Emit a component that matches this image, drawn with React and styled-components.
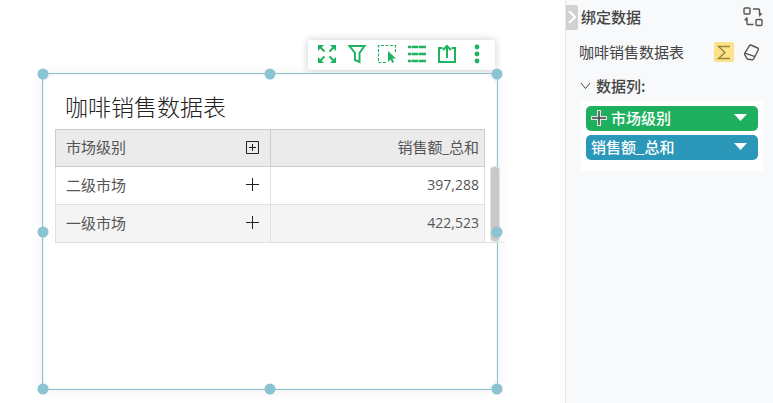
import React from "react";
import styled, { createGlobalStyle } from "styled-components";

const GlobalStyle = createGlobalStyle`
  * { box-sizing: border-box; }
  body {
    margin: 0;
    background: #fff;
    color: #444;
    font-family: "Open Sans", "Noto Sans CJK SC", sans-serif;
    font-size: 15px;
  }
  h1, h2, h3, ul { margin: 0; padding: 0; font-weight: 400; }
  svg { display: block; }
`;

const cjk = `"Noto Sans CJK SC", sans-serif`;
const accent = "#8bc3d3";

const Page = styled.div`
  display: flex;
  min-height: 100vh;
`;

const Canvas = styled.main`
  flex: 1;
  min-width: 0;
  display: flex;
  flex-direction: column;
  padding: 40px 67px 13px 42px;
`;

const PlainButton = styled.button`
  display: flex;
  align-items: center;
  justify-content: center;
  padding: 0;
  border: 0;
  background: transparent;
  color: inherit;
  font: inherit;
  cursor: pointer;
`;

const Toolbar = styled.div`
  align-self: flex-end;
  display: flex;
  height: 30px;
  margin: 0 3px 3px 0;
  padding: 0 3px 0 4px;
  border-radius: 2px;
  background: #fff;
  color: #1fb35f;
  box-shadow: 0 0 8px rgba(0, 0, 0, 0.2);
`;

const ToolButton = styled(PlainButton)`
  width: 30px;
  height: 28px;
`;

const Widget = styled.section`
  position: relative;
  flex: 1;
  display: flex;
  flex-direction: column;
  border: 1px solid ${accent};
  background: #f5f5f5;
  box-shadow: 0 1px 12px rgba(0, 0, 0, 0.07);
`;

const Card = styled.div`
  flex: 1;
  margin: 1px;
  padding: 15px 0 0 11px;
  border-radius: 12px;
  background: #fff;
`;

const Title = styled.h1`
  padding-left: 10px;
  font-family: ${cjk};
  font-size: 23px;
  font-weight: 300;
  line-height: 32px;
  color: #222;
`;

const Handle = styled.span`
  position: absolute;
  left: ${(p) => p.$x};
  top: ${(p) => p.$y};
  width: 11px;
  height: 11px;
  border-radius: 50%;
  background: ${accent};
  transform: translate(-50%, -50%);
`;

const GridArea = styled.div`
  display: flex;
  margin: 7px -9px 0 0;
`;

const Table = styled.table`
  flex: 1;
  border-collapse: collapse;
  table-layout: fixed;
  color: #555;
`;

const NameCol = styled.col`
  width: 50%;
`;

const HeadCell = styled.th`
  height: 37px;
  padding: 0 ${(p) => (p.$end ? "5px" : "10px")} 2px 10px;
  border: 1px solid #ccc;
  background: #ebebeb;
  font-weight: 400;
  line-height: 22px;
  text-align: ${(p) => (p.$end ? "right" : "left")};
`;

const Cell = styled.td`
  height: 38px;
  padding: 0 ${(p) => (p.$end ? "5px" : "10px")} 2px 10px;
  border: 1px solid #e0e0e0;
  background: ${(p) => (p.$shade ? "#f4f4f4" : "#fff")};
  font-size: ${(p) => (p.$end ? "14px" : "15px")};
  line-height: 22px;
  text-align: ${(p) => (p.$end ? "right" : "left")};
`;

const Spread = styled.div`
  display: flex;
  align-items: center;
  justify-content: space-between;
`;

const ExpandButton = styled(PlainButton)`
  width: 15px;
  height: 15px;
  color: #222;
`;

const Track = styled.div`
  width: 20px;
  display: flex;
  padding: 37px 5px 0;
  border-bottom: 1px solid #e2e2e2;
`;

const Thumb = styled.div`
  flex: 1;
  border-radius: 4px;
  border: 1px solid #e4e4e4;
  background: #c8c8c8;
`;

const Panel = styled.aside`
  width: 208px;
  flex: none;
  border-left: 1px solid #e5e8ec;
  background: #f7f9fb;
  font-family: ${cjk};
`;

const PanelHeader = styled.header`
  display: flex;
  align-items: center;
  height: 34px;
  padding-right: 10px;
`;

const CollapseButton = styled(PlainButton)`
  width: 12px;
  height: 25px;
  margin-right: 3px;
  border-radius: 0 2px 2px 0;
  background: #d1d1d1;
  color: #fff;
`;

const PanelTitle = styled.h2`
  flex: 1;
  font-size: 15px;
  font-weight: 500;
  line-height: 22px;
`;

const SourceRow = styled.div`
  display: flex;
  align-items: center;
  height: 36px;
  padding: 0 11px 0 13px;
`;

const SourceName = styled.span`
  flex: 1;
  line-height: 22px;
`;

const IconButton = styled(PlainButton)`
  width: 20px;
  height: 20px;
  margin-left: ${(p) => (p.$gap ? "8px" : "0")};
  border-radius: 2px;
  background: ${(p) => (p.$active ? "#fee28a" : "transparent")};
  color: ${(p) => (p.$active ? "#9a8442" : "#555")};
`;

const SectionToggle = styled(PlainButton)`
  gap: 5px;
  height: 31px;
  padding-left: 14px;
  font-weight: 500;
  line-height: 22px;
`;

const Fields = styled.ul`
  display: flex;
  flex-direction: column;
  gap: 4px;
  margin: 0 10px 0 15px;
  padding: 5px 5px 11px;
  border-radius: 3px;
  background: #fff;
  list-style: none;
`;

const Chip = styled.li`
  display: flex;
  align-items: center;
  gap: 4px;
  height: 25px;
  padding: 0 11px 2px 5px;
  border-radius: 5px;
  background: ${(p) => p.$color};
  color: #fff;
  font-weight: 500;
  line-height: 22px;
`;

const ChipLabel = styled.span`
  flex: 1;
`;

const Icon = ({ size = 20, width = 2, children, ...rest }) => (
  <svg
    width={size}
    height={size}
    viewBox={`0 0 ${size} ${size}`}
    fill="none"
    stroke="currentColor"
    strokeWidth={width}
    aria-hidden="true"
    {...rest}
  >
    {children}
  </svg>
);

const tools = [
  {
    label: "最大化",
    icon: (
      <Icon>
        <path d="M2 2l5.500 5.500M18 2l-5.500 5.500M18 18l-5.500-5.500M2 18l5.500-5.500" />
        <path d="M1 1h6L1 7zM19 1h-6l6 6zM19 19h-6l6-6zM1 19h6L1 13z" fill="currentColor" stroke="none" />
      </Icon>
    ),
  },
  {
    label: "筛选",
    icon: (
      <Icon>
        <path d="M2.500 2h15L12.500 9v9L8 16V9z" />
      </Icon>
    ),
  },
  {
    label: "选择",
    icon: (
      <Icon>
        <path d="M9 18.500H1.500v-17h17V9" strokeWidth="1.200" strokeDasharray="3 1.500" />
        <path d="M11 7v11l2.600-2.600 1.700 3.600 1.800-.9-1.700-3.500H19z" fill="currentColor" stroke="none" />
      </Icon>
    ),
  },
  {
    label: "列表",
    icon: (
      <Icon width={2.4}>
        <path d="M1 3h3.500M5 3h6.500M12 3H19M1 10h3.500M5 10h6.500M12 10H19M1 17h3.500M5 17h6.500M12 17H19" />
      </Icon>
    ),
  },
  {
    label: "导出",
    icon: (
      <Icon>
        <path d="M5.500 4H2v14h16V4h-3.500M10 14V2M6 6l4-4 4 4" />
      </Icon>
    ),
  },
  {
    label: "更多",
    icon: (
      <Icon fill="currentColor" stroke="none">
        <circle cx="10" cy="3" r="2.400" />
        <circle cx="10" cy="10" r="2.400" />
        <circle cx="10" cy="17" r="2.400" />
      </Icon>
    ),
  },
];

const handles = [
  ["0%", "0%"], ["50%", "0%"], ["100%", "0%"],
  ["0%", "50%"], ["100%", "50%"],
  ["0%", "100%"], ["50%", "100%"], ["100%", "100%"],
];

const rows = [
  { name: "二级市场", total: "397,288" },
  { name: "一级市场", total: "422,523" },
];

const fields = [
  { name: "市场级别", color: "#1eb05e", plus: true },
  { name: "销售额_总和", color: "#2b97b9" },
];

const PlusIcon = ({ boxed }) => (
  <Icon size={15} width={1}>
    {boxed && <path d="M1.500 1.500h12v12h-12z" />}
    <path d={boxed ? "M4 7.500h7M7.500 4v7" : "M1 7.500h13M7.500 1v13"} />
  </Icon>
);

export default function App() {
  return (
    <>
      <GlobalStyle />
      <Page>
        <Canvas>
          <Toolbar role="toolbar">
            {tools.map((t) => (
              <ToolButton key={t.label} aria-label={t.label}>{t.icon}</ToolButton>
            ))}
          </Toolbar>
          <Widget>
            <Card>
              <Title>咖啡销售数据表</Title>
              <GridArea>
                <Table>
                  <colgroup>
                    <NameCol />
                    <col />
                  </colgroup>
                  <thead>
                    <tr>
                      <HeadCell scope="col">
                        <Spread>
                          市场级别
                          <ExpandButton aria-label="全部展开"><PlusIcon boxed /></ExpandButton>
                        </Spread>
                      </HeadCell>
                      <HeadCell scope="col" $end>销售额_总和</HeadCell>
                    </tr>
                  </thead>
                  <tbody>
                    {rows.map((r, i) => (
                      <tr key={r.name}>
                        <Cell $shade={i % 2 === 1}>
                          <Spread>
                            {r.name}
                            <ExpandButton aria-label="展开"><PlusIcon /></ExpandButton>
                          </Spread>
                        </Cell>
                        <Cell $end $shade={i % 2 === 1}>{r.total}</Cell>
                      </tr>
                    ))}
                  </tbody>
                </Table>
                <Track><Thumb /></Track>
              </GridArea>
            </Card>
            {handles.map(([x, y]) => (
              <Handle key={x + y} $x={x} $y={y} />
            ))}
          </Widget>
        </Canvas>

        <Panel>
          <PanelHeader>
            <CollapseButton aria-label="收起">
              <svg width="8" height="14" viewBox="0 0 8 14" fill="none" stroke="currentColor" strokeWidth="2">
                <path d="M1 1l6 6-6 6" />
              </svg>
            </CollapseButton>
            <PanelTitle>绑定数据</PanelTitle>
            <IconButton aria-label="切换">
              <Icon width={1.4}>
                <rect x="1" y="1" width="6" height="6" rx="1" />
                <rect x="13" y="12.500" width="6" height="6" rx="1" />
                <path d="M10 2h5.500q1 0 1 1v5M10.500 17.500H5q-1 0-1-1v-5" />
                <path d="M16.500 9.500V6l2.300.5zM4 10v3.500L1.500 13z" fill="currentColor" strokeWidth="0.600" />
              </Icon>
            </IconButton>
          </PanelHeader>
          <SourceRow>
            <SourceName>咖啡销售数据表</SourceName>
            <IconButton $active aria-label="汇总">
              <Icon width={1.4}>
                <path d="M16 4.500H4.500l6.500 6-6.500 6H16" />
              </Icon>
            </IconButton>
            <IconButton $gap aria-label="清除">
              <Icon width={1.4} strokeLinejoin="round">
                <path d="M8.700 3l7 3q1.200.6.600 1.800l-4.500 9q-.5 1-1.600.9l-4.200-.4q-.7 0-1-.8L2.800 12.800q-.4-.8 0-1.600l4.700-7.500q.4-1 1.200-.7zM3.500 11.300l9.700 3.400" />
              </Icon>
            </IconButton>
          </SourceRow>
          <SectionToggle aria-expanded="true">
            <svg width="11" height="8" viewBox="0 0 11 8" fill="none" stroke="currentColor">
              <path d="M1 1l4.500 5.500L10 1" />
            </svg>
            数据列:
          </SectionToggle>
          <Fields>
            {fields.map((f) => (
              <Chip key={f.name} $color={f.color}>
                {f.plus && (
                  <svg width="16" height="16" viewBox="0 0 16 16" fill="none" aria-hidden="true">
                    <path d="M0 8h16M8 0v16" stroke="#dfe5e0" strokeWidth="4" />
                    <path d="M1 8h14M8 1v14" stroke="#444" strokeWidth="1.500" />
                  </svg>
                )}
                <ChipLabel>{f.name}</ChipLabel>
                <PlainButton aria-label={f.name + " 菜单"}>
                  <svg width="13" height="7" viewBox="0 0 13 7" fill="currentColor">
                    <path d="M0 0h13L6.500 7z" />
                  </svg>
                </PlainButton>
              </Chip>
            ))}
          </Fields>
        </Panel>
      </Page>
    </>
  );
}
